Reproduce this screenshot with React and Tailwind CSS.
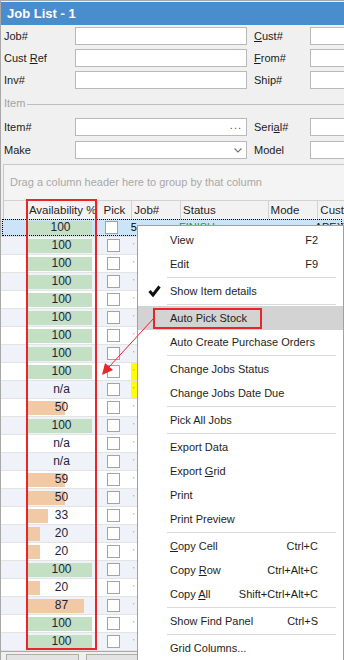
import React from "react";

const rows = [
  { v: "100", w: 65 }, { v: "100", w: 65 }, { v: "100", w: 65 }, { v: "100", w: 65 },
  { v: "100", w: 65 }, { v: "100", w: 65 }, { v: "100", w: 65 }, { v: "100", w: 65 },
  { v: "100", w: 65, yellow: true }, { v: "n/a", w: 0, yellow: true }, { v: "50", w: 38 },
  { v: "100", w: 65 }, { v: "n/a", w: 0 }, { v: "n/a", w: 0 }, { v: "59", w: 38 },
  { v: "50", w: 38 }, { v: "33", w: 21 }, { v: "20", w: 13 }, { v: "20", w: 13 },
  { v: "100", w: 65 }, { v: "20", w: 13 }, { v: "87", w: 57 }, { v: "100", w: 65 },
  { v: "100", w: 65 },
];

const menu = [
  { label: "View", key: "F2" },
  { label: "Edit", key: "F9" },
  "sep",
  { label: "Show Item details", check: true },
  "sep",
  { label: "Auto Pick Stock", hl: true },
  { label: "Auto Create Purchase Orders" },
  "sep",
  { label: "Change Jobs Status" },
  { label: "Change Jobs Date Due" },
  "sep",
  { label: "Pick All Jobs" },
  "sep",
  { label: "Export Data" },
  { label: <>Export <u>G</u>rid</> },
  { label: "Print" },
  { label: "Print Preview" },
  "sep",
  { label: <><u>C</u>opy Cell</>, key: "Ctrl+C" },
  { label: <>Copy <u>R</u>ow</>, key: "Ctrl+Alt+C" },
  { label: <>Copy <u>A</u>ll</>, key: "Shift+Ctrl+Alt+C" },
  "sep",
  { label: "Show Find Panel", key: "Ctrl+S" },
  "sep",
  { label: "Grid Columns..." },
];

function Field({ label, children, right }) {
  return (
    <div className="flex items-center h-[18px]">
      <div className={`${right ? "w-[56px]" : "w-[71px]"} text-[#1b1b1b]`}>{label}</div>
      <div className={`${right ? "w-[40px]" : "w-[172px]"} h-[18px] bg-white border border-[#b9b9b9] flex items-center justify-end pr-[4px] text-[#555]`}>
        {children}
      </div>
    </div>
  );
}

function FormRow({ left, right }) {
  return (
    <div className="flex items-center gap-[7px]">
      <Field label={left} />
      <Field label={right} right />
    </div>
  );
}

function Checkbox() {
  return <div className="w-[13px] h-[13px] bg-white border border-[#a3a3a3]" />;
}

function GridRow({ r, i }) {
  const selected = i === 0;
  const bg = selected ? "bg-[#cce4f7]" : i % 2 === 1 ? "bg-[#eff2f8]" : "bg-white";
  return (
    <div className={`relative flex h-[18px] border-b border-[#e3e3e3] ${bg}`}>
      {selected && <div className="absolute inset-x-[2px] inset-y-0 border border-dotted border-black pointer-events-none" />}
      <div className="w-[25px]" />
      <div className="w-[71px] grid items-center pl-[2px]">
        {r.w > 0 && (
          <div
            className={`col-start-1 row-start-1 h-[14px] ${r.v === "100" ? "bg-[#c3dfc4]" : "bg-[#f1c9a5]"}`}
            style={{ width: r.w }}
          />
        )}
        <div className="col-start-1 row-start-1 text-center text-[#1e1e40] text-[12px]">{r.v}</div>
      </div>
      <div className="w-[35px] flex items-center justify-center">
        <Checkbox />
      </div>
      <div className={`w-[49px] pl-[2px] flex items-center ${r.yellow ? "bg-[#ffff00]" : ""} text-[#e07a00]`}>
        {selected ? <span className="text-black">5</span> : <span className="text-[8px]">'</span>}
      </div>
      <div className="w-[88px] pl-[2px] flex items-center text-[#1a9a1a]">{selected ? "FINISH" : ""}</div>
      <div className="w-[50px]" />
      <div className="flex-1 pl-[2px] flex items-center">{selected ? "APEX" : ""}</div>
    </div>
  );
}

export default function App() {
  return (
    <div className="relative w-[344px] h-[660px] overflow-hidden bg-[#f0f0f0] border-l border-t border-[#a8a8a8] font-['Liberation_Sans',Arial,sans-serif] text-[11px] leading-[13px] text-[#1b1b1b]">
      {/* Title */}
      <div className="mt-[1px] h-[23px] bg-[#4a8dcc] flex items-center pl-[6px] text-white font-bold text-[13px]">
        Job List - 1
      </div>

      {/* Filters */}
      <div className="pl-[3px] pt-[2px] flex flex-col gap-[4px]">
        <FormRow left="Job#" right={<><u>C</u>ust#</>} />
        <FormRow left={<>Cust <u>R</u>ef</>} right={<><u>F</u>rom#</>} />
        <FormRow left="Inv#" right="Ship#" />
      </div>

      {/* Item group */}
      <div className="pl-[3px] mt-[8px] h-[13px] flex items-center gap-[2px] text-[#a3a3a3]">
        <span>Item</span>
        <div className="flex-1 h-px bg-[#bdbdbd] mt-[2px]" />
      </div>
      <div className="pl-[3px] mt-[8px] flex flex-col gap-[5px]">
        <div className="flex items-center gap-[7px]">
          <Field label="Item#"><span className="tracking-[1px] -mt-[4px]">...</span></Field>
          <Field label={<>Seri<u>a</u>l#</>} right />
        </div>
        <div className="flex items-center gap-[7px]">
          <Field label="Make">
            <svg width="8" height="5" viewBox="0 0 8 5"><path d="M0.5 0.5 L4 4 L7.5 0.5" fill="none" stroke="#777" strokeWidth="1.2" /></svg>
          </Field>
          <Field label="Model" right />
        </div>
      </div>

      {/* Grid */}
      <div className="mt-[5px] ml-[2px] border-l border-t border-[#c8c8c8] bg-[#f4f4f4]">
        <div className="h-[35px] flex items-center pl-[6px] text-[#a8a8a8]">
          Drag a column header here to group by that column
        </div>
        <div className="flex h-[19px] border-t border-[#d2d2d2] bg-[#f2f2f2] text-[#1e1e1e] text-[11.5px]">
          <div className="w-[23px] border-r border-[#d2d2d2]" />
          <div className="w-[71px] pl-[2px] flex items-center border-r border-[#d2d2d2]">Availability %</div>
          <div className="w-[35px] flex items-center justify-center border-r border-[#d2d2d2]">Pick</div>
          <div className="w-[49px] pl-[2px] flex items-center border-r border-[#d2d2d2]">Job#</div>
          <div className="w-[88px] pl-[2px] flex items-center border-r border-[#d2d2d2]">Status</div>
          <div className="w-[50px] pl-[2px] flex items-center border-r border-[#d2d2d2]">Mode</div>
          <div className="flex-1 pl-[2px] flex items-center">Cust</div>
        </div>
      </div>
      <div className="-ml-px">
        {rows.map((r, i) => (
          <GridRow key={i} r={r} i={i} />
        ))}
      </div>
      <div className="border-t border-[#a9a9a9] flex gap-[7px] pl-[5px] pt-[2px]">
        <div className="w-[73px] h-[12px] bg-[#e3e3e3] border border-[#adadad]" />
        <div className="w-[60px] h-[12px] bg-[#e3e3e3] border border-[#adadad]" />
      </div>

      {/* Red annotation around availability column */}
      <div className="absolute left-[25px] top-[198px] w-[71px] h-[451px] border-2 border-[#e8262a] pointer-events-none" />

      {/* Context menu */}
      <div className="absolute left-[136px] top-[224px] w-[207px] bg-white border border-[#a0a0a0] pt-[2px] text-[#1e1e1e] text-[11px]">
        {menu.map((m, i) =>
          m === "sep" ? (
            <div key={i} className="h-[3px] flex items-center pl-[29px] pr-[7px]">
              <div className="h-px w-full bg-[#d9d9d9]" />
            </div>
          ) : (
            <div key={i} className={`relative h-[24px] flex items-center ${m.hl ? "bg-[#d3d3d3]" : ""}`}>
              <div className="w-[32px] flex justify-center">
                {m.check && (
                  <svg width="13" height="12" viewBox="0 0 13 12">
                    <polyline points="1.5,6 5,10 11.5,1.5" fill="none" stroke="#111" strokeWidth="3" />
                  </svg>
                )}
              </div>
              <div className="flex-1">{m.label}</div>
              {m.key && <div className="pr-[25px]">{m.key}</div>}
              {m.hl && <div className="absolute left-[15px] top-[2px] w-[109px] h-[21px] border-2 border-[#e8262a]" />}
            </div>
          )
        )}
      </div>

      {/* Arrow */}
      <svg className="absolute left-0 top-0 pointer-events-none" width="344" height="660">
        <line x1="153" y1="317" x2="108" y2="366" stroke="#e8262a" strokeWidth="1" />
        <polygon points="101,374 104,362 112,369" fill="#e8262a" />
      </svg>
    </div>
  );
}
